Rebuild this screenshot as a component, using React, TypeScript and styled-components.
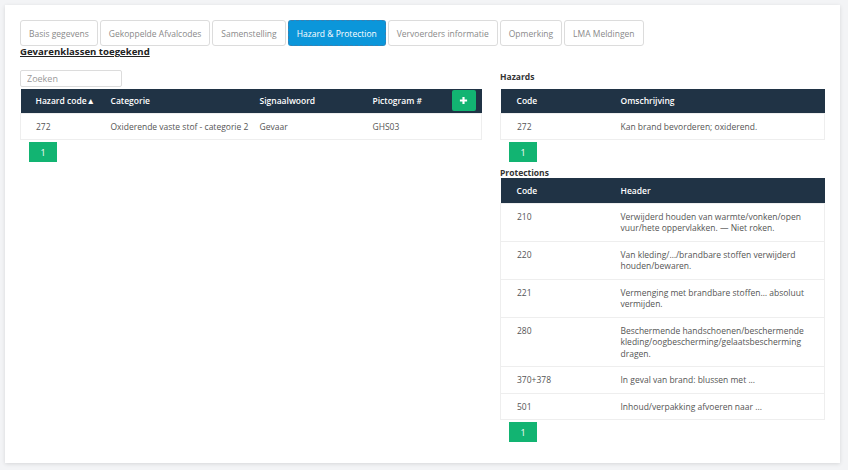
import React from "react";
import styled, { createGlobalStyle } from "styled-components";

const GlobalStyle = createGlobalStyle`
  html, body {
    margin: 0;
    padding: 0;
    background: #f3f4f6;
    font-family: "Open Sans", "Noto Sans", sans-serif;
  }
`;

const Page = styled.div`
  padding: 5px 0 0 5px;
  width: 848px;
  height: 470px;
  box-sizing: border-box;
`;

const Card = styled.div`
  width: 835px;
  height: 458px;
  box-sizing: border-box;
  background: #fff;
  box-shadow: 0 1px 4px rgba(0, 0, 0, 0.12);
  padding: 15px 15px 20px 15px;
`;

const Tabs = styled.div`
  display: flex;
  gap: 2px;
`;

const Tab = styled.button<{ $active?: boolean }>`
  height: 26px;
  padding: 0 8px;
  font-family: inherit;
  font-size: 8.5px;
  border-radius: 3px;
  background: ${(p) => (p.$active ? "#0b96da" : "#fff")};
  color: ${(p) => (p.$active ? "#fff" : "#8a8a8a")};
  border: 1px ${(p) => (p.$active ? "dashed #3a7fb0" : "solid #dcdcdc")};
  font-weight: 400;
  white-space: nowrap;
  cursor: pointer;
`;

const Title = styled.h3`
  margin: 0;
  font-size: 9.6px;
  line-height: 12px;
  font-weight: 700;
  color: #222;
  text-decoration: underline;
`;

const Columns = styled.div`
  display: grid;
  grid-template-columns: 462px 325px;
  gap: 18px;
  margin-top: 12px;
  align-items: start;
`;

const Column = styled.div`
  display: flex;
  flex-direction: column;
`;

const Search = styled.input`
  width: 102px;
  height: 17px;
  box-sizing: border-box;
  border: 1px solid #dcdcdc;
  border-radius: 2px;
  padding: 0 6px;
  font-family: inherit;
  font-size: 9px;
  color: #555;
  margin-bottom: 2px;
  &::placeholder {
    color: #999;
  }
`;

const Label = styled.div<{ $top?: number }>`
  font-size: 8.5px;
  font-weight: 700;
  color: #333;
  height: 19px;
  line-height: 12px;
  padding-top: ${(p) => p.$top ?? 0}px;
  box-sizing: border-box;
`;

const SubLabel = styled(Label)`
  height: 16px;
  line-height: 12px;
`;

const Table = styled.table`
  width: 100%;
  border-collapse: collapse;
  table-layout: fixed;
  font-size: 8.5px;
`;

const Th = styled.th<{ $w?: number; $pl?: number; $h?: number }>`
  background: #203345;
  color: #fff;
  font-weight: 600;
  text-align: left;
  height: ${(p) => p.$h ?? 24}px;
  padding: 0 0 0 ${(p) => p.$pl ?? 15}px;
  width: ${(p) => (p.$w ? `${p.$w}px` : "auto")};
  box-sizing: border-box;
  vertical-align: middle;
`;

const Tr = styled.tr`
  border: 1px solid #eeeeee;
`;

const Td = styled.td<{ $pl?: number; $nowrap?: boolean }>`
  color: #555;
  padding: 7px 2px 7px ${(p) => p.$pl ?? 15}px;
  line-height: 11.5px;
  vertical-align: top;
  white-space: ${(p) => (p.$nowrap ? "nowrap" : "normal")};
  overflow: visible;
`;

const AddButton = styled.button`
  width: 24px;
  height: 21px;
  border: none;
  border-radius: 2px;
  background: #12b472;
  color: #fff;
  display: flex;
  align-items: center;
  justify-content: center;
  padding: 0;
  cursor: pointer;
`;

const Pager = styled.div`
  display: flex;
  padding: 2px 0 0 9px;
`;

const PageButton = styled.button`
  width: 28px;
  height: 20px;
  border: none;
  background: #12b472;
  color: #fff;
  font-family: inherit;
  font-size: 9px;
  padding: 0;
`;

const Plus = () => (
  <svg width="9" height="9" viewBox="0 0 10 10">
    <path d="M5 1v8M1 5h8" stroke="#fff" strokeWidth="2.4" />
  </svg>
);

const tabs = [
  "Basis gegevens",
  "Gekoppelde Afvalcodes",
  "Samenstelling",
  "Hazard & Protection",
  "Vervoerders informatie",
  "Opmerking",
  "LMA Meldingen",
];

const protections = [
  ["210", "Verwijderd houden van warmte/vonken/open vuur/hete oppervlakken. — Niet roken."],
  ["220", "Van kleding/…/brandbare stoffen verwijderd houden/bewaren."],
  ["221", "Vermenging met brandbare stoffen… absoluut vermijden."],
  ["280", "Beschermende handschoenen/beschermende kleding/oogbescherming/gelaatsbescherming dragen."],
  ["370+378", "In geval van brand: blussen met ..."],
  ["501", "Inhoud/verpakking afvoeren naar ..."],
];

export default function App() {
  return (
    <>
      <GlobalStyle />
      <Page>
        <Card>
          <Tabs>
            {tabs.map((t) => (
              <Tab key={t} $active={t === "Hazard & Protection"}>
                {t}
              </Tab>
            ))}
          </Tabs>
          <Title>Gevarenklassen toegekend</Title>
          <Columns>
            <Column>
              <Search placeholder="Zoeken" />
              <Table>
                <thead>
                  <tr>
                    <Th $w={75}>Hazard code▲</Th>
                    <Th $w={149}>Categorie</Th>
                    <Th $w={113}>Signaalwoord</Th>
                    <Th $w={84}>Pictogram #</Th>
                    <Th $pl={10}>
                      <AddButton>
                        <Plus />
                      </AddButton>
                    </Th>
                  </tr>
                </thead>
                <tbody>
                  <Tr>
                    <Td $nowrap>272</Td>
                    <Td $nowrap>Oxiderende vaste stof - categorie 2</Td>
                    <Td $nowrap>Gevaar</Td>
                    <Td $nowrap>GHS03</Td>
                    <Td />
                  </Tr>
                </tbody>
              </Table>
              <Pager>
                <PageButton>1</PageButton>
              </Pager>
            </Column>
            <Column>
              <Label $top={1}>Hazards</Label>
              <Table>
                <thead>
                  <tr>
                    <Th $w={104} $pl={16}>Code</Th>
                    <Th $pl={16}>Omschrijving</Th>
                  </tr>
                </thead>
                <tbody>
                  <Tr>
                    <Td $pl={16}>272</Td>
                    <Td $pl={16}>Kan brand bevorderen; oxiderend.</Td>
                  </Tr>
                </tbody>
              </Table>
              <Pager>
                <PageButton>1</PageButton>
              </Pager>
              <SubLabel $top={5}>Protections</SubLabel>
              <Table>
                <thead>
                  <tr>
                    <Th $w={104} $pl={16} $h={25}>Code</Th>
                    <Th $pl={16} $h={25}>Header</Th>
                  </tr>
                </thead>
                <tbody>
                  {protections.map(([code, text]) => (
                    <Tr key={code}>
                      <Td $pl={16}>{code}</Td>
                      <Td $pl={16}>{text}</Td>
                    </Tr>
                  ))}
                </tbody>
              </Table>
              <Pager>
                <PageButton>1</PageButton>
              </Pager>
            </Column>
          </Columns>
        </Card>
      </Page>
    </>
  );
}
